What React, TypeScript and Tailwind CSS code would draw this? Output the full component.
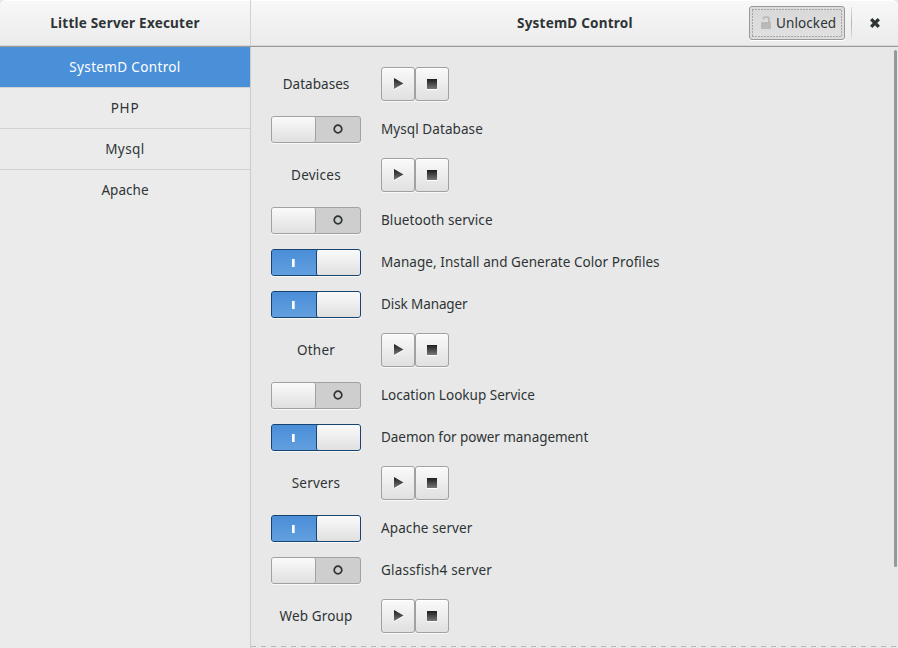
import React from "react";

type Row =
  | { kind: "group"; name: string; tracking: string }
  | { kind: "unit"; name: string; on: boolean; tracking: string };

const rows: Row[] = [
  { kind: "group", name: "Databases", tracking: "tracking-[0.03px]" },
  { kind: "unit", name: "Mysql Database", on: false, tracking: "tracking-[0.08px]" },
  { kind: "group", name: "Devices", tracking: "tracking-[0.25px]" },
  { kind: "unit", name: "Bluetooth service", on: false, tracking: "tracking-[0.08px]" },
  { kind: "unit", name: "Manage, Install and Generate Color Profiles", on: true, tracking: "tracking-[0.065px]" },
  { kind: "unit", name: "Disk Manager", on: true, tracking: "tracking-[-0.1px]" },
  { kind: "group", name: "Other", tracking: "tracking-[0.2px]" },
  { kind: "unit", name: "Location Lookup Service", on: false, tracking: "tracking-[0.02px]" },
  { kind: "unit", name: "Daemon for power management", on: true, tracking: "tracking-[-0.05px]" },
  { kind: "group", name: "Servers", tracking: "tracking-[0.2px]" },
  { kind: "unit", name: "Apache server", on: true, tracking: "tracking-[0.1px]" },
  { kind: "unit", name: "Glassfish4 server", on: false, tracking: "tracking-[0.2px]" },
  { kind: "group", name: "Web Group", tracking: "tracking-[0.15px]" },
];

function ActionButton({ type }: { type: "play" | "stop" }) {
  return (
    <button
      aria-label={type}
      className="h-[34px] w-[34px] rounded-[3px] border border-[#a1a1a1] bg-gradient-to-b from-[#fafafa] to-[#e0e0e0] shadow-[0_1px_0_#f8f8f8,inset_0_1px_0_#ffffff]"
    >
      <svg width="32" height="32" viewBox="0 0 32 32" className="block">
        <defs>
          <linearGradient id="glyph" x1="0" y1="0" x2="0" y2="1">
            <stop offset="0" stopColor="#1c1c1c" />
            <stop offset="1" stopColor="#777777" />
          </linearGradient>
        </defs>
        {type === "play" ? (
          <>
            <path d="M12 11V22L21.5 16.5Z" fill="#ffffff" />
            <path d="M12 10V21L21.5 15.5Z" fill="url(#glyph)" />
          </>
        ) : (
          <>
            <rect x="11" y="12" width="10" height="10" fill="#ffffff" />
            <rect x="11" y="11" width="10" height="10" fill="url(#glyph)" />
          </>
        )}
      </svg>
    </button>
  );
}

function Switch({ on }: { on: boolean }) {
  if (on) {
    return (
      <div className="flex h-[27px] w-[90px] rounded-[3px] border border-[#184472] bg-[#4a90d9] shadow-[0_1px_0_#f8f8f8]">
        <div className="flex w-[44px] items-center justify-center rounded-l-[2px] bg-gradient-to-b from-[#4a8ed8] to-[#629fdf] pr-px">
          <span className="h-[8px] w-[3px] border-r border-[#c4dcf5] bg-white" />
        </div>
        <div className="flex-1 rounded-[2px] border-l border-[#184472] bg-gradient-to-b from-[#fafafa] to-[#e0e0e0]" />
      </div>
    );
  }
  return (
    <div className="flex h-[27px] w-[90px] rounded-[3px] border border-[#a1a1a1] bg-[#cecece] shadow-[0_1px_0_#f8f8f8]">
      <div className="w-[44px] rounded-[2px] border-r border-[#a1a1a1] bg-gradient-to-b from-[#fafafa] to-[#e0e0e0]" />
      <div className="flex flex-1 items-center justify-center pb-px">
        <svg width="10" height="10" viewBox="0 0 10 10">
          <circle cx="5" cy="5" r="3.8" fill="none" stroke="#2e3436" strokeWidth="1.7" />
        </svg>
      </div>
    </div>
  );
}

const tabs = [
  { name: "SystemD Control", tracking: "tracking-[0.35px]" },
  { name: "PHP", tracking: "tracking-[0.8px]" },
  { name: "Mysql", tracking: "tracking-[0.45px]" },
  { name: "Apache", tracking: "tracking-[0.05px]" },
];

export default function App() {
  return (
    <div className="flex h-[648px] w-[898px] flex-col overflow-hidden bg-[#e8e8e8] font-['Noto_Sans',sans-serif] text-[13.5px] leading-[20px] text-[#2e3436]">
      <header className="flex h-[47px] shrink-0 rounded-t-[6px] border-b border-[#999999] bg-gradient-to-b from-[#f8f8f8] to-[#ebebeb] shadow-[inset_0_1px_0_#ffffff,inset_0_-1px_0_#d8d8d8]">
        <div className="flex w-[251px] items-center justify-center border-r border-[#d2d2d2] font-bold">
          <span className="tracking-[0.22px]">Little Server Executer</span>
        </div>
        <div className="flex flex-1 items-center pl-[266px] font-bold">
          <span className="w-[116px] whitespace-nowrap tracking-[0.22px]">SystemD Control</span>
          <button className="ml-[116px] h-[34px] w-[96px] rounded-[3px] border border-[#999999] bg-[#dcdcdc] p-[2px] font-normal shadow-[0_1px_0_#ffffff]">
            <span className="flex h-full bg-[repeating-linear-gradient(90deg,#a6a6a6_0_2px,#dcdcdc_2px_3px)] p-px">
              <span className="flex flex-1 bg-[#dcdcdc]">
                <span className="-mx-px flex flex-1 items-center justify-center gap-[5px] bg-[repeating-linear-gradient(180deg,#a6a6a6_0_2px,#dcdcdc_2px_3px)] px-px">
                  <span className="flex h-full flex-1 items-center gap-[5px] bg-gradient-to-b from-[#d9d9d9] to-[#e0e0e0] pb-px pl-[8px]">
                    <svg width="10" height="14" viewBox="0 0 10 14">
                      <path d="M0 7.5h10v7H0Z" fill="#ffffff" />
                      <path d="M0 6h10v7.5H0Z" fill="#b9b9b9" />
                      <path d="M2.5 3.5V2.5Q2.5 1.2 4 1.2H6Q8 1.2 8 3V6.5" fill="none" stroke="#b9b9b9" strokeWidth="1.8" />
                    </svg>
                    <span className="tracking-[0.1px]">Unlocked</span>
                  </span>
                </span>
              </span>
            </span>
          </button>
          <span className="ml-[6px] h-[32px] w-px bg-gradient-to-b from-[#e0e0e0] via-[#b4b4b4] to-[#e0e0e0]" />
          <svg className="ml-[18px]" width="10" height="10" viewBox="0 0 10 10">
            <path d="M1.2 1.2L8.8 8.8M8.8 1.2L1.2 8.8" stroke="#2e3436" strokeWidth="3.3" />
          </svg>
        </div>
      </header>
      <div className="flex min-h-0 flex-1">
        <nav className="flex w-[251px] flex-col border-r border-[#cbcbcb] bg-[#ebebeb]">
          {tabs.map((t, i) => (
            <div
              key={t.name}
              className={
                "flex items-center justify-center " +
                (i === 0
                  ? "h-[41px] border-b border-[#d2d2d2] bg-[#4a90d9] text-white"
                  : i < 3
                    ? "h-[41px] border-b border-[#d2d2d2]"
                    : "h-[40px]")
              }
            >
              <span className={t.tracking}>{t.name}</span>
            </div>
          ))}
        </nav>
        <main className="flex flex-1 flex-col">
          <div className="flex min-h-0 flex-1">
            <div className="flex flex-1 flex-col gap-[15px] pl-[20px] pt-[20px]">
              {rows.map((r) =>
                r.kind === "group" ? (
                  <div key={r.name} className="flex h-[34px] items-center gap-[20px]">
                    <span className={"w-[90px] text-center " + r.tracking}>{r.name}</span>
                    <div className="flex">
                      <ActionButton type="play" />
                      <ActionButton type="stop" />
                    </div>
                  </div>
                ) : (
                  <div key={r.name} className="flex h-[27px] items-center gap-[20px]">
                    <Switch on={r.on} />
                    <span className={"pb-[2px] " + r.tracking}>{r.name}</span>
                  </div>
                ),
              )}
            </div>
            <div className="mr-[1px] mt-[3px] h-[517px] w-[3px] rounded-full bg-[#949999]" />
          </div>
          <div className="mb-px h-px shrink-0 bg-[repeating-linear-gradient(90deg,#b8b8b8_0_5px,#e8e8e8_5px_10px)]" />
        </main>
      </div>
    </div>
  );
}
